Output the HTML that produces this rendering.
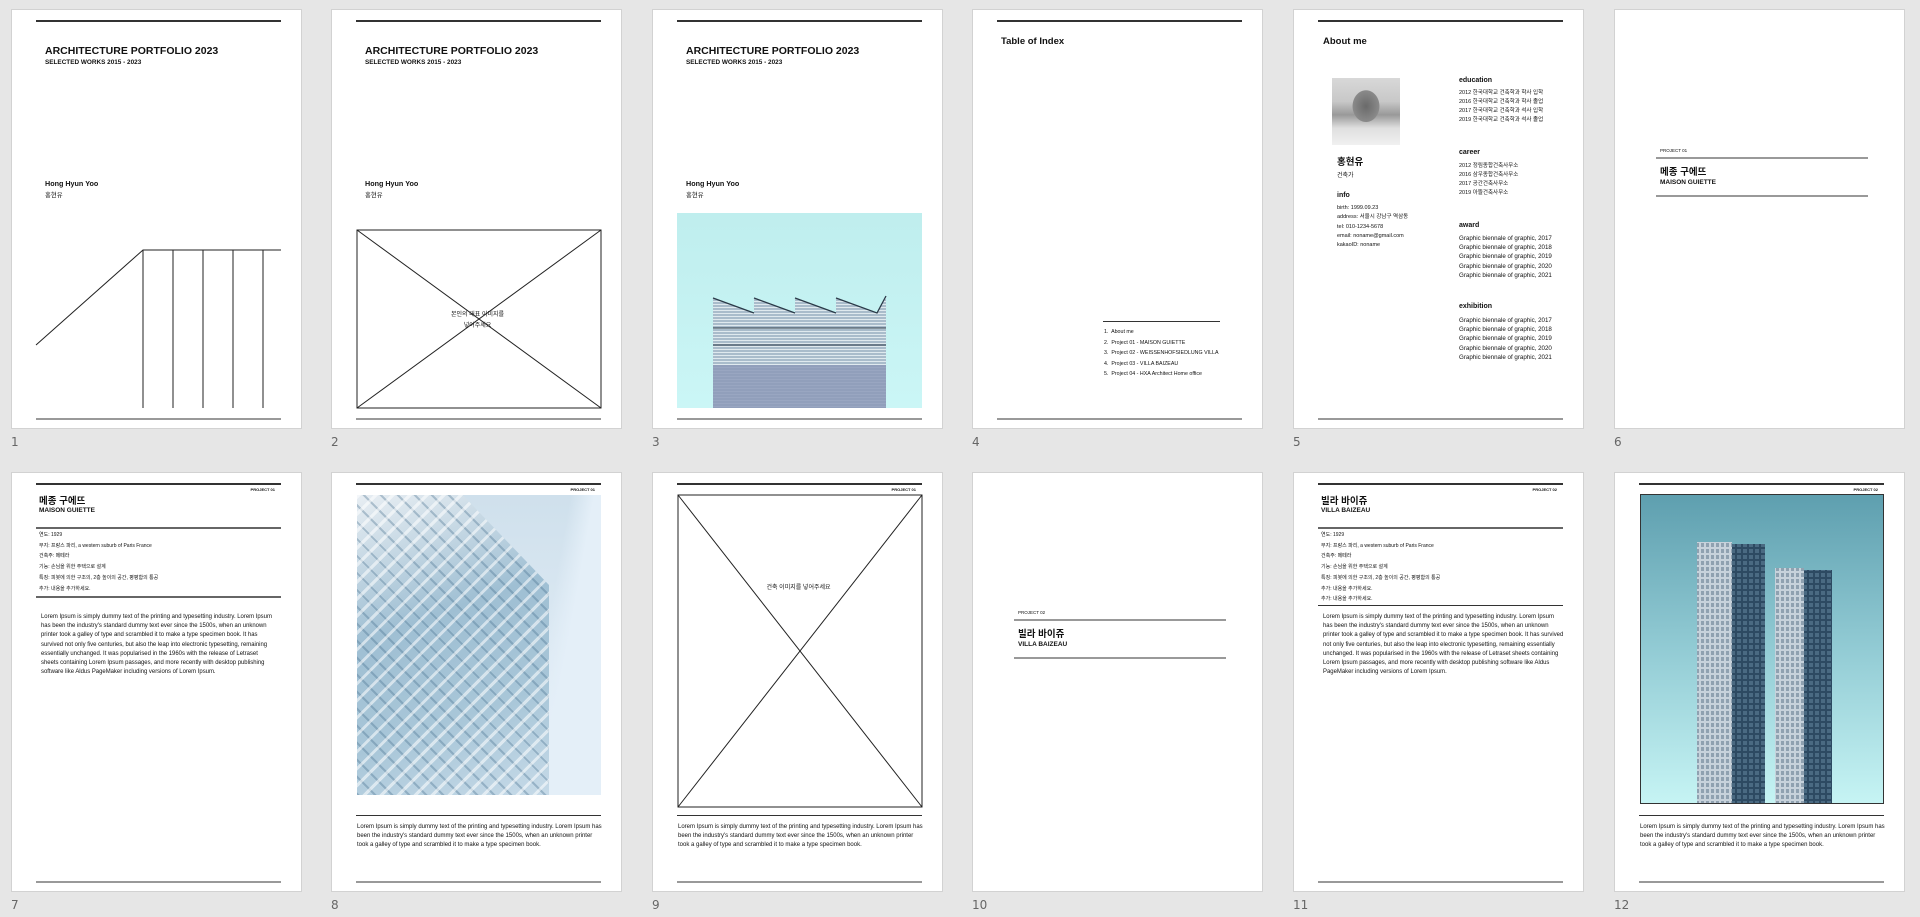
<!DOCTYPE html>
<html><head><meta charset="utf-8">
<style>
*{margin:0;padding:0;box-sizing:border-box}
body{width:1920px;height:917px;background:#e6e6e6;position:relative;overflow:hidden;font-family:"Liberation Sans","Noto Sans CJK KR",sans-serif;color:#111}
.pg{position:absolute;width:291px;height:420px;background:#fff;border:1px solid #d2d2d2;overflow:hidden}
.pg>*{position:absolute;white-space:nowrap}
.tl{left:24px;width:245px;height:2px;background:#333;top:10px}
.bl{left:24px;width:245px;height:2px;background:#999;top:408px}
.num{position:absolute;font-size:12px;color:#666;font-family:"DejaVu Sans",sans-serif}
.b{font-weight:bold}
.t1{font-size:10.5px;font-weight:bold;left:33px;top:35px}
.t2{font-size:6.4px;font-weight:bold;left:33px;top:49px}
.nm{font-size:7.2px;font-weight:bold;left:33px;top:169px}
.kn{font-size:6.4px;left:33px;top:180px}
.s{font-size:5.2px;line-height:9.2px}
.p{font-size:5.95px;line-height:9.2px}
.h{font-size:7px;font-weight:bold}
</style></head><body>

<!-- page 1 -->
<div class="pg" style="left:11px;top:9px">
<div class="tl"></div>
<div class="t1">ARCHITECTURE PORTFOLIO 2023</div>
<div class="t2">SELECTED WORKS 2015 - 2023</div>
<div class="nm">Hong Hyun Yoo</div>
<div class="kn">홍현유</div>
<svg style="left:0;top:0" width="291" height="420"><g stroke="#222" stroke-width="1" fill="none">
<path d="M24 335 L131 240 L269 240"/><path d="M131 240V398M161 240V398M191 240V398M221 240V398M251 240V398"/></g></svg>
<div class="bl"></div>
</div>

<!-- page 2 -->
<div class="pg" style="left:331px;top:9px">
<div class="tl"></div>
<div class="t1">ARCHITECTURE PORTFOLIO 2023</div>
<div class="t2">SELECTED WORKS 2015 - 2023</div>
<div class="nm">Hong Hyun Yoo</div>
<div class="kn">홍현유</div>
<svg style="left:0;top:0" width="291" height="420"><g stroke="#222" stroke-width="1" fill="none">
<rect x="25" y="220" width="244" height="178"/><path d="M25 220L269 398M269 220L25 398"/></g></svg>
<div style="left:0;width:291px;text-align:center;top:300px;font-size:6px;line-height:11px">본인의 대표 이미지를<br>넣어주세요</div>
<div class="bl"></div>
</div>

<!-- page 3 -->
<div class="pg" style="left:652px;top:9px">
<div class="tl"></div>
<div class="t1">ARCHITECTURE PORTFOLIO 2023</div>
<div class="t2">SELECTED WORKS 2015 - 2023</div>
<div class="nm">Hong Hyun Yoo</div>
<div class="kn">홍현유</div>
<div style="left:24px;top:203px;width:245px;height:195px;background:linear-gradient(#bfeeee,#cbf6f6)"></div>
<svg style="left:0;top:0" width="291" height="420">
<defs><pattern id="st" width="10" height="3" patternUnits="userSpaceOnUse"><rect width="10" height="3" fill="#a9bccb"/><rect width="10" height="1" fill="#dfe9ee"/></pattern></defs>
<path d="M60 288 L101 303 L101 288 L142 303 L142 288 L183 303 L183 288 L224 303 L233 286 L233 398 L60 398Z" fill="url(#st)"/>
<rect x="60" y="355" width="173" height="43" fill="#8d9ab8" opacity=".85"/>
<g stroke="#2a3a48" stroke-width="1.3" fill="none"><path d="M60 288L101 303M101 288L142 303M142 288L183 303M183 288L224 303L233 286"/><path d="M60 318H233M60 335H233" stroke-width="1"/></g>
</svg>
<div class="bl"></div>
</div>

<!-- page 4 -->
<div class="pg" style="left:972px;top:9px">
<div class="tl"></div>
<div style="left:28px;top:26px;font-size:9.5px;font-weight:bold">Table of Index</div>
<div style="left:130px;top:311px;width:117px;height:1px;background:#333"></div>
<div class="s" style="left:131px;top:317px;line-height:10.6px;font-size:5.3px">1.&nbsp; About me<br>2.&nbsp; Project 01 - MAISON GUIETTE<br>3.&nbsp; Project 02 - WEISSENHOFSIEDLUNG VILLA<br>4.&nbsp; Project 03 - VILLA BAIZEAU<br>5.&nbsp; Project 04 - HXA Architect Home office</div>
<div class="bl"></div>
</div>

<!-- page 5 -->
<div class="pg" style="left:1293px;top:9px">
<div class="tl"></div>
<div style="left:29px;top:26px;font-size:9.5px;font-weight:bold">About me</div>
<div style="left:38px;top:68px;width:68px;height:67px;background:radial-gradient(ellipse 22px 26px at 50% 42%,#6a6a6a 0,#8a8a8a 60%,transparent 62%),linear-gradient(#d8d8d8 0,#c8c8c8 35%,#999 55%,#e0e0e0 75%,#f0f0f0 100%)"></div>
<div style="left:43px;top:144px;font-size:9.5px;font-weight:bold">홍현유</div>
<div style="left:43px;top:160px;font-size:6px">건축가</div>
<div class="h" style="left:43px;top:182px">info</div>
<div class="s" style="left:43px;top:194px;font-size:5.5px;line-height:9.3px">birth: 1999.09.23<br>address: 서울시 강남구 역삼동<br>tel: 010-1234-5678<br>email: noname@gmail.com<br>kakaoID: noname</div>
<div class="h" style="left:165px;top:67px">education</div>
<div class="s" style="left:165px;top:79px;font-size:5.5px;line-height:9.1px">2012 한국대학교 건축학과 학사 입학<br>2016 한국대학교 건축학과 학사 졸업<br>2017 한국대학교 건축학과 석사 입학<br>2019 한국대학교 건축학과 석사 졸업</div>
<div class="h" style="left:165px;top:139px">career</div>
<div class="s" style="left:165px;top:152px;font-size:5.5px;line-height:9.1px">2012 정림종합건축사무소<br>2016 삼우종합건축사무소<br>2017 공간건축사무소<br>2019 아뜰건축사무소</div>
<div class="h" style="left:165px;top:212px">award</div>
<div class="s" style="left:165px;top:224px;font-size:6.2px;line-height:9.2px">Graphic biennale of graphic, 2017<br>Graphic biennale of graphic, 2018<br>Graphic biennale of graphic, 2019<br>Graphic biennale of graphic, 2020<br>Graphic biennale of graphic, 2021</div>
<div class="h" style="left:165px;top:293px">exhibition</div>
<div class="s" style="left:165px;top:306px;font-size:6.2px;line-height:9.2px">Graphic biennale of graphic, 2017<br>Graphic biennale of graphic, 2018<br>Graphic biennale of graphic, 2019<br>Graphic biennale of graphic, 2020<br>Graphic biennale of graphic, 2021</div>
<div class="bl"></div>
</div>

<!-- page 6 -->
<div class="pg" style="left:1614px;top:9px">
<div style="left:45px;top:138px;font-size:4.5px">PROJECT 01</div>
<div style="left:41px;top:147px;width:212px;height:2px;background:#999"></div>
<div style="left:45px;top:154px;font-size:9.5px;font-weight:bold">메종 구에뜨</div>
<div style="left:45px;top:169px;font-size:6.5px;font-weight:bold">MAISON GUIETTE</div>
<div style="left:41px;top:185px;width:212px;height:2px;background:#999"></div>
</div>

<div class="num" style="left:11px;top:435px">1</div>
<div class="num" style="left:331px;top:435px">2</div>
<div class="num" style="left:652px;top:435px">3</div>
<div class="num" style="left:972px;top:435px">4</div>
<div class="num" style="left:1293px;top:435px">5</div>
<div class="num" style="left:1614px;top:435px">6</div>

<!-- page 7 -->
<div class="pg" style="left:11px;top:472px">
<div class="tl"></div>
<div style="right:26px;top:14px;font-size:4px;font-weight:bold">PROJECT 01</div>
<div style="left:27px;top:20px;font-size:9.5px;font-weight:bold">메종 구에뜨</div>
<div style="left:27px;top:34px;font-size:6.5px;font-weight:bold">MAISON GUIETTE</div>
<div style="left:24px;top:54px;width:245px;height:2px;background:#666"></div>
<div class="s" style="left:27px;top:57px;font-size:5px;line-height:10.7px">연도: 1929<br>부지: 프랑스 파리, a western suburb of Paris France<br>건축주: 메떼라<br>기능: 손님을 위한 주택으로 설계<br>특징: 피봇에 의한 구조의, 2층 높이의 공간, 평평함의 통공<br>추가: 내용을 추가하세요.</div>
<div style="left:24px;top:123px;width:245px;height:2px;background:#666"></div>
<div class="p" style="left:29px;top:140px">Lorem Ipsum is simply dummy text of the printing and typesetting industry. Lorem Ipsum<br>has been the industry's standard dummy text ever since the 1500s, when an unknown<br>printer took a galley of type and scrambled it to make a type specimen book. It has<br>survived not only five centuries, but also the leap into electronic typesetting, remaining<br>essentially unchanged. It was popularised in the 1960s with the release of Letraset<br>sheets containing Lorem Ipsum passages, and more recently with desktop publishing<br>software like Aldus PageMaker including versions of Lorem Ipsum.</div>
<div class="bl"></div>
</div>

<!-- page 8 -->
<div class="pg" style="left:331px;top:472px">
<div class="tl"></div>
<div style="right:26px;top:14px;font-size:4px;font-weight:bold">PROJECT 01</div>
<div style="left:25px;top:22px;width:244px;height:300px;background:linear-gradient(100deg,transparent 0,transparent 72%,#e4eff8 80%),linear-gradient(#cfe0ec,#e9f2fa)"></div>
<div style="left:25px;top:22px;width:192px;height:300px;clip-path:polygon(0 0,55% 0,100% 30%,100% 100%,0 100%);background:repeating-linear-gradient(135deg,rgba(255,255,255,.55) 0 3px,transparent 3px 12px),repeating-linear-gradient(45deg,rgba(70,110,140,.35) 0 2px,transparent 2px 12px),linear-gradient(160deg,#e8eef3,#9fbfd3 40%,#a8c6d8 70%,#c6dae8)"></div>
<div style="left:24px;top:342px;width:245px;height:1px;background:#333"></div>
<div class="p" style="left:25px;top:350px;font-size:6px">Lorem Ipsum is simply dummy text of the printing and typesetting industry. Lorem Ipsum has<br>been the industry's standard dummy text ever since the 1500s, when an unknown printer<br>took a galley of type and scrambled it to make a type specimen book.</div>
<div class="bl"></div>
</div>

<!-- page 9 -->
<div class="pg" style="left:652px;top:472px">
<div class="tl"></div>
<div style="right:26px;top:14px;font-size:4px;font-weight:bold">PROJECT 01</div>
<svg style="left:0;top:0" width="291" height="420"><g stroke="#222" stroke-width="1" fill="none">
<rect x="25" y="22" width="244" height="312"/><path d="M25 22L269 334M269 22L25 334"/></g></svg>
<div style="left:0;width:291px;text-align:center;top:109px;font-size:6px">건축 이미지를 넣어주세요</div>
<div style="left:24px;top:342px;width:245px;height:1px;background:#333"></div>
<div class="p" style="left:25px;top:350px;font-size:6px">Lorem Ipsum is simply dummy text of the printing and typesetting industry. Lorem Ipsum has<br>been the industry's standard dummy text ever since the 1500s, when an unknown printer<br>took a galley of type and scrambled it to make a type specimen book.</div>
<div class="bl"></div>
</div>

<!-- page 10 -->
<div class="pg" style="left:972px;top:472px">
<div style="left:45px;top:137px;font-size:4.5px">PROJECT 02</div>
<div style="left:41px;top:146px;width:212px;height:2px;background:#999"></div>
<div style="left:45px;top:153px;font-size:9.5px;font-weight:bold">빌라 바이쥬</div>
<div style="left:45px;top:168px;font-size:6.5px;font-weight:bold">VILLA BAIZEAU</div>
<div style="left:41px;top:184px;width:212px;height:2px;background:#999"></div>
</div>

<!-- page 11 -->
<div class="pg" style="left:1293px;top:472px">
<div class="tl"></div>
<div style="right:26px;top:14px;font-size:4px;font-weight:bold">PROJECT 02</div>
<div style="left:27px;top:20px;font-size:9.5px;font-weight:bold">빌라 바이쥬</div>
<div style="left:27px;top:34px;font-size:6.5px;font-weight:bold">VILLA BAIZEAU</div>
<div style="left:24px;top:54px;width:245px;height:2px;background:#666"></div>
<div class="s" style="left:27px;top:57px;font-size:5px;line-height:10.7px">연도: 1929<br>부지: 프랑스 파리, a western suburb of Paris France<br>건축주: 메떼라<br>기능: 손님을 위한 주택으로 설계<br>특징: 피봇에 의한 구조의, 2층 높이의 공간, 평평함의 통공<br>추가: 내용을 추가하세요.<br>추가: 내용을 추가하세요.</div>
<div style="left:24px;top:132px;width:245px;height:1px;background:#333"></div>
<div class="p" style="left:29px;top:140px">Lorem Ipsum is simply dummy text of the printing and typesetting industry. Lorem Ipsum<br>has been the industry's standard dummy text ever since the 1500s, when an unknown<br>printer took a galley of type and scrambled it to make a type specimen book. It has survived<br>not only five centuries, but also the leap into electronic typesetting, remaining essentially<br>unchanged. It was popularised in the 1960s with the release of Letraset sheets containing<br>Lorem Ipsum passages, and more recently with desktop publishing software like Aldus<br>PageMaker including versions of Lorem Ipsum.</div>
<div class="bl"></div>
</div>

<!-- page 12 -->
<div class="pg" style="left:1614px;top:472px">
<div class="tl"></div>
<div style="right:26px;top:14px;font-size:4px;font-weight:bold">PROJECT 02</div>
<div style="left:25px;top:21px;width:244px;height:310px;border:1px solid #333;background:linear-gradient(#5e9faf,#92cbd4 50%,#c6f4f4)"></div>
<svg style="left:25px;top:21px" width="244" height="310">
<defs>
<pattern id="w1" width="5" height="6" patternUnits="userSpaceOnUse"><rect width="5" height="6" fill="#c7d2db"/><rect x="1" y="1" width="3" height="4" fill="#8fa1b0"/></pattern>
<pattern id="w2" width="6" height="6" patternUnits="userSpaceOnUse"><rect width="6" height="6" fill="#2d4a62"/><rect x="1" y="1" width="4" height="4" fill="#4a6a82"/></pattern>
</defs>
<rect x="57" y="48" width="35" height="261" fill="url(#w1)"/>
<rect x="92" y="50" width="33" height="259" fill="url(#w2)"/>
<rect x="135" y="74" width="29" height="235" fill="url(#w1)"/>
<rect x="164" y="76" width="28" height="233" fill="url(#w2)"/>
</svg>
<div style="left:24px;top:342px;width:245px;height:1px;background:#333"></div>
<div class="p" style="left:25px;top:350px;font-size:6px">Lorem Ipsum is simply dummy text of the printing and typesetting industry. Lorem Ipsum has<br>been the industry's standard dummy text ever since the 1500s, when an unknown printer<br>took a galley of type and scrambled it to make a type specimen book.</div>
<div class="bl"></div>
</div>

<div class="num" style="left:11px;top:898px">7</div>
<div class="num" style="left:331px;top:898px">8</div>
<div class="num" style="left:652px;top:898px">9</div>
<div class="num" style="left:972px;top:898px">10</div>
<div class="num" style="left:1293px;top:898px">11</div>
<div class="num" style="left:1614px;top:898px">12</div>
</body></html>
